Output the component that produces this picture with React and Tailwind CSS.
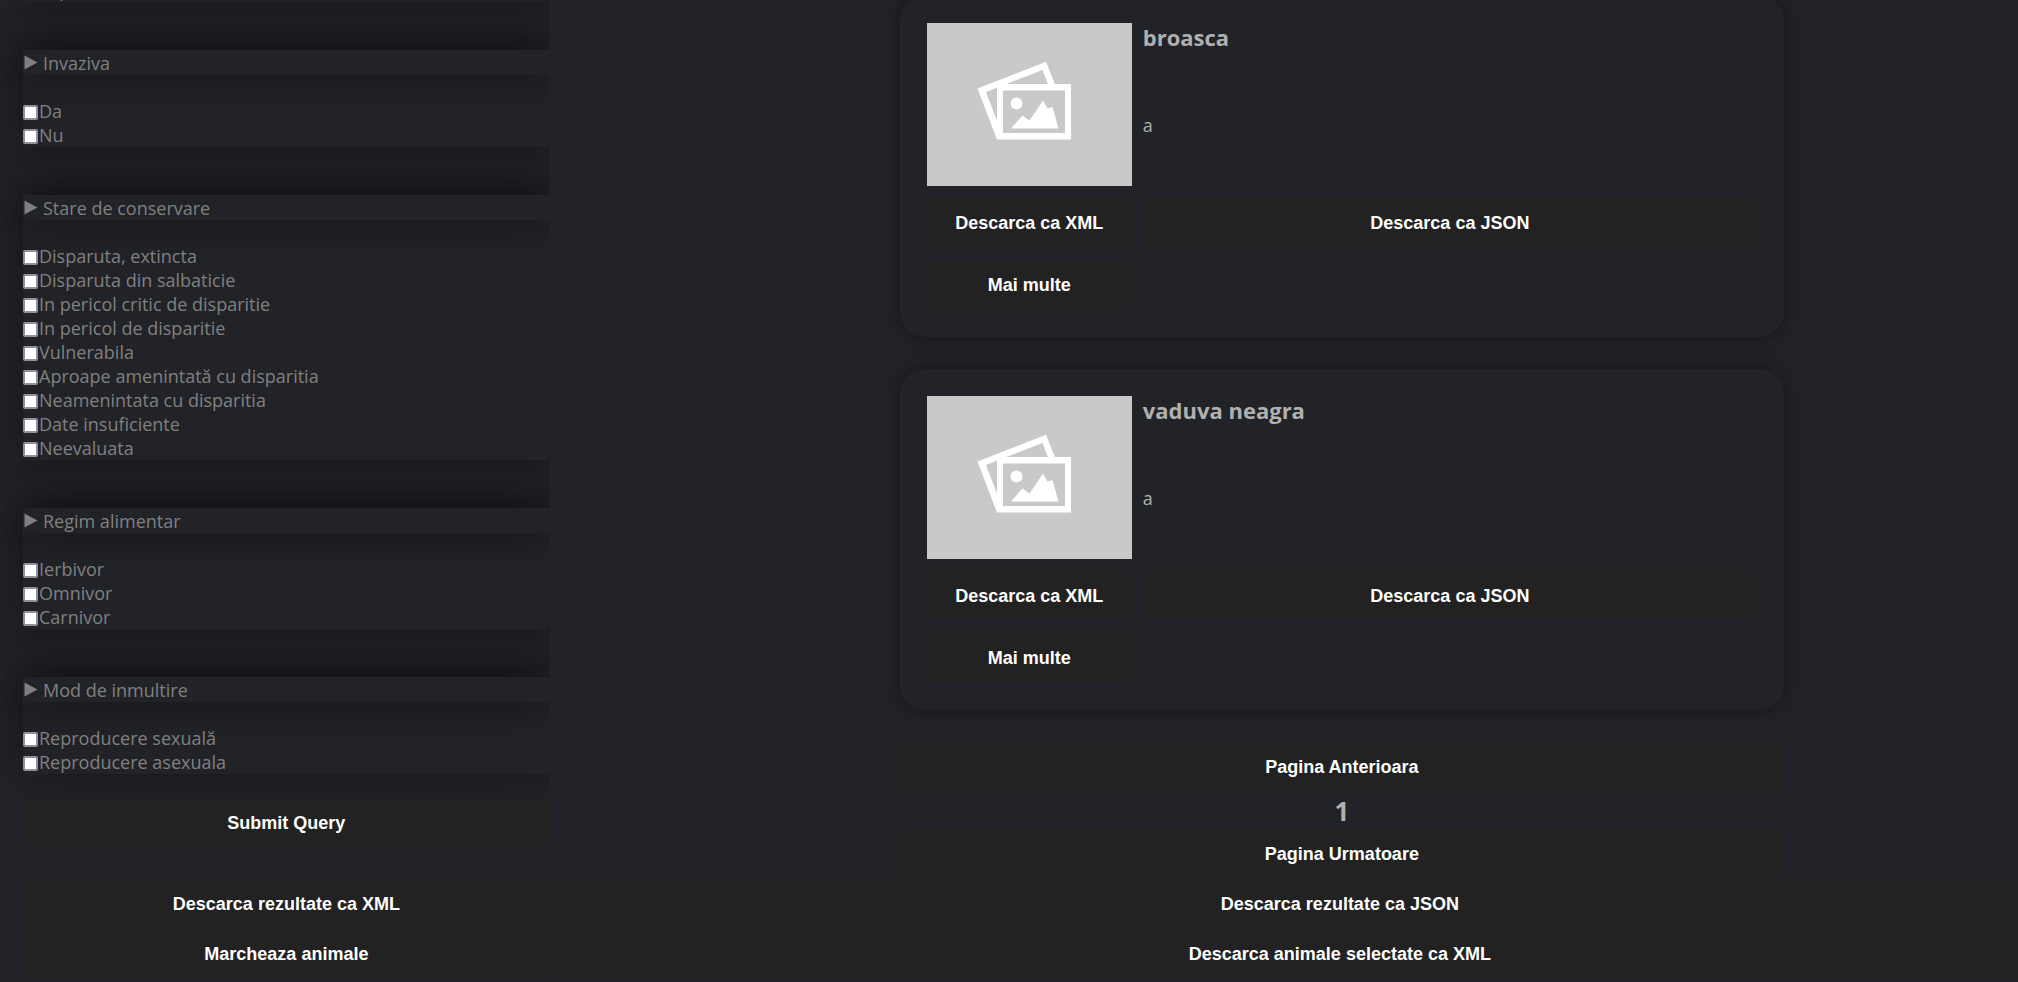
const buttonBase = "bg-[#222222] text-white font-bold text-[18px] leading-[24px] rounded-[4px] font-['Liberation_Sans',sans-serif]";

function Button({ children, className = "" }) {
  return <button type="button" className={`${buttonBase} ${className}`}>{children}</button>;
}

const groups = [
  { title: "Invaziva", items: ["Da", "Nu"] },
  {
    title: "Stare de conservare",
    items: [
      "Disparuta, extincta",
      "Disparuta din salbaticie",
      "In pericol critic de disparitie",
      "In pericol de disparitie",
      "Vulnerabila",
      "Aproape amenintată cu disparitia",
      "Neamenintata cu disparitia",
      "Date insuficiente",
      "Neevaluata",
    ],
  },
  { title: "Regim alimentar", items: ["Ierbivor", "Omnivor", "Carnivor"] },
  { title: "Mod de inmultire", items: ["Reproducere sexuală", "Reproducere asexuala"] },
];

const groupBox = "bg-[#222328] rounded-[5px] shadow-[0_0_40px_rgba(0,0,0,0.4)]";

function Group({ title, items }) {
  return (
    <fieldset className={`${groupBox} min-w-0`}>
      <div className="flex h-[25px] items-center gap-[5px] bg-[#222328] pl-px shadow-[0_0_40px_rgba(0,0,0,0.5)]">
        <svg viewBox="0 0 14 15" className="h-[15px] w-[14px] shrink-0" aria-hidden="true">
          <path d="M0.500 0.500L13.500 7.500L0.500 14.500Z" fill="#808080" />
        </svg>
        <span>{title}</span>
      </div>
      <div className="flex flex-col pt-[24px]">
        {items.map((item) => (
          <label key={item} className="flex h-[24px] items-center gap-px">
            <input
              type="checkbox"
              className="mt-[3px] h-[15px] w-[15px] shrink-0 appearance-none rounded-[2px] border-2 border-[#8f8f9d] bg-white checked:bg-[#0060df]"
            />
            {item}
          </label>
        ))}
      </div>
    </fieldset>
  );
}

function Placeholder() {
  return (
    <svg viewBox="0 0 205 163" className="block h-[163px] w-full" role="img" aria-label="Imagine">
      <rect width="205" height="163" fill="#c9c9c9" />
      <path
        d="M50.500 65.500L119 38.800L128 61.500H121L115.500 47L78 61.500H70.500V99L59 69L70.500 64.500L70 116.500Z"
        fill="#fff"
        fillRule="evenodd"
      />
      <path d="M70 61H144V116.500H70ZM76 67.500V110H138V67.500Z" fill="#fff" fillRule="evenodd" />
      <circle cx="89.500" cy="80.500" r="6" fill="#fff" />
      <path d="M84 105.500L95.500 92.500L102.500 97.500L116 77.500L120.500 85.500L125.500 84L131.500 105.500Z" fill="#fff" />
    </svg>
  );
}

function Card({ name }) {
  return (
    <article className="grid grid-cols-[205px_1fr] gap-[11px] rounded-[25px] bg-[#222328] p-[27px] shadow-[0_0_20px_rgba(0,0,0,0.4)]">
      <Placeholder />
      <div className="text-[#b0b0b0]">
        <h3 className="text-[22px] font-bold leading-[28px]">{name}</h3>
        <p className="mt-[62px] text-[18px] leading-[24px]">a</p>
      </div>
      <Button className="h-[51px]">Descarca ca XML</Button>
      <Button className="h-[51px]">Descarca ca JSON</Button>
      <Button className="h-[51px]">Mai multe</Button>
    </article>
  );
}

export default function App() {
  return (
    <div className="min-h-screen overflow-hidden bg-[#222328] font-['Open_Sans',sans-serif] text-[18px] leading-[24px] text-[#808080]">
      <div className="-mr-[112px] pl-[23px]">
        <div className="grid grid-cols-4">
          <form className="flex flex-col" onSubmit={(e) => e.preventDefault()}>
            <div className={`${groupBox} -mt-[22px] h-[24px] pl-[15px]`}>Reproducere</div>
            <div className="mt-[48px] flex flex-col gap-[48px]">
              {groups.map((g) => (
                <Group key={g.title} title={g.title} items={g.items} />
              ))}
            </div>
            <Button className="relative mt-[25px] h-[47px]">Submit Query</Button>
          </form>
          <main className="relative col-span-3 bg-[#222328] pl-[350px] pr-[346px]">
            <div className="-mt-[4px] flex flex-col gap-[32px]">
              <Card name="broasca" />
              <Card name="vaduva neagra" />
              <nav className="flex flex-col" aria-label="Paginare">
                <Button className="h-[50px]">Pagina Anterioara</Button>
                <p className="flex h-[37px] items-center justify-center text-[26px] font-bold text-[#b0b0b0]">1</p>
                <Button className="h-[50px]">Pagina Urmatoare</Button>
              </nav>
            </div>
          </main>
        </div>
        <div className="relative grid grid-cols-4">
          <Button className="h-[50px]">Descarca rezultate ca XML</Button>
          <Button className="col-span-3 h-[50px]">Descarca rezultate ca JSON</Button>
          <Button className="h-[50px]">Marcheaza animale</Button>
          <Button className="col-span-3 h-[50px]">Descarca animale selectate ca XML</Button>
        </div>
      </div>
    </div>
  );
}
